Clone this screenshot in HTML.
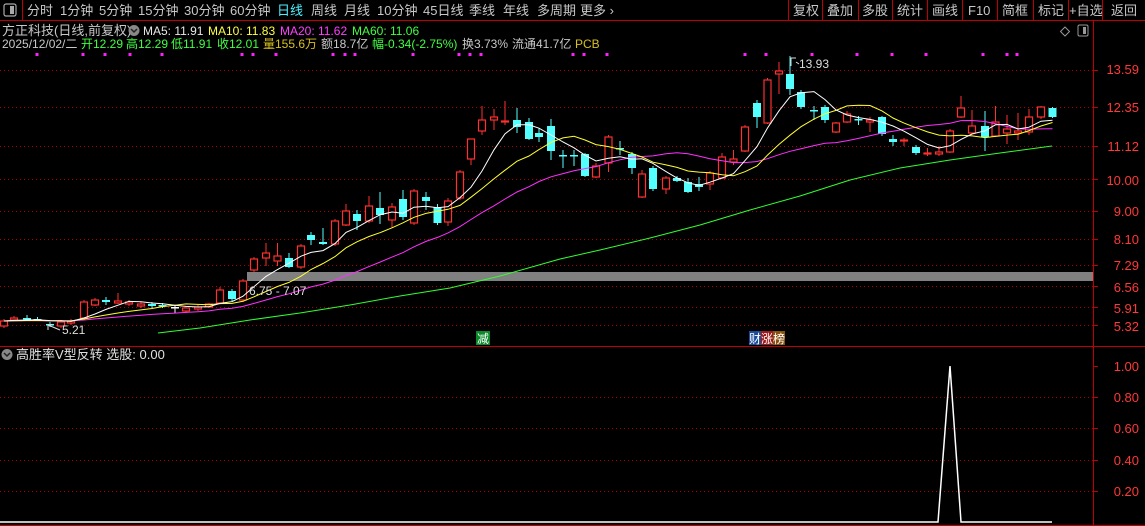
<!DOCTYPE html>
<html><head><meta charset="utf-8">
<style>
html,body{margin:0;padding:0;background:#000;width:1145px;height:526px;overflow:hidden}
svg{display:block}
text{font-family:"Liberation Sans","Noto Sans CJK SC",sans-serif}
</style></head><body>
<svg id="s" width="1145" height="526" viewBox="0 0 1145 526" xmlns="http://www.w3.org/2000/svg">
<rect width="1145" height="526" fill="#000"/>
<!-- toolbar -->
<g font-size="13" fill="#c8c8c8">
<rect x="4" y="4" width="12" height="12" rx="2" fill="none" stroke="#aaa" stroke-width="1.2"/>
<rect x="10" y="6" width="4" height="8" fill="#aaa"/>
<line x1="22.5" y1="0" x2="22.5" y2="20" stroke="#c00000"/>
<text x="27" y="15">分时</text>
<text x="60" y="15">1分钟</text>
<text x="99" y="15">5分钟</text>
<text x="138" y="15">15分钟</text>
<text x="184" y="15">30分钟</text>
<text x="230" y="15">60分钟</text>
<text x="277" y="15" fill="#4ff0ff">日线</text>
<text x="311" y="15">周线</text>
<text x="344" y="15">月线</text>
<text x="377" y="15">10分钟</text>
<text x="423" y="15">45日线</text>
<text x="469" y="15">季线</text>
<text x="503" y="15">年线</text>
<text x="537" y="15">多周期</text>
<text x="580" y="15">更多 ›</text>
<text x="793" y="15">复权</text>
<text x="827" y="15">叠加</text>
<text x="862" y="15">多股</text>
<text x="897" y="15">统计</text>
<text x="932" y="15">画线</text>
<text x="968" y="15">F10</text>
<text x="1002" y="15">简框</text>
<text x="1038" y="15">标记</text>
<text x="1069" y="15">+自选</text>
<text x="1111" y="15">返回</text>
</g>
<g stroke="#c00000">
<line x1="788.5" y1="0" x2="788.5" y2="20"/><line x1="822.5" y1="0" x2="822.5" y2="20"/>
<line x1="858.5" y1="0" x2="858.5" y2="20"/><line x1="892.5" y1="0" x2="892.5" y2="20"/>
<line x1="927.5" y1="0" x2="927.5" y2="20"/><line x1="962.5" y1="0" x2="962.5" y2="20"/>
<line x1="997.5" y1="0" x2="997.5" y2="20"/><line x1="1033.5" y1="0" x2="1033.5" y2="20"/>
<line x1="1068.5" y1="0" x2="1068.5" y2="20"/><line x1="1102.5" y1="0" x2="1102.5" y2="20"/>
<line x1="0" y1="20.5" x2="1145" y2="20.5"/>
<line x1="1093.5" y1="20" x2="1093.5" y2="526"/>
<line x1="0" y1="346.5" x2="1145" y2="346.5"/>
<line x1="0" y1="525.5" x2="1145" y2="525.5"/>
</g>
<!-- header -->
<g font-size="12">
<text x="2" y="35" fill="#c8c8c8" font-size="13">方正科技(日线,前复权)</text>
<circle cx="134" cy="30.5" r="5.5" fill="#888"/><path d="M131 29l3 3 3-3" stroke="#222" fill="none" stroke-width="1.5"/>
<text x="143" y="35" fill="#e8e8e8">MA5: 11.91</text>
<text x="208" y="35" fill="#ffff40">MA10: 11.83</text>
<text x="280" y="35" fill="#ff40ff">MA20: 11.62</text>
<text x="352" y="35" fill="#40ff40">MA60: 11.06</text>
<text x="2" y="48" fill="#c8c8c8">2025/12/02/二</text>
<text x="81" y="48" fill="#40ff40">开12.29</text>
<text x="126" y="48" fill="#40ff40">高12.29</text>
<text x="171" y="48" fill="#40ff40">低11.91</text>
<text x="217" y="48" fill="#40ff40">收12.01</text>
<text x="263" y="48" fill="#d8c020">量155.6万</text>
<text x="321" y="48" fill="#c8c8c8">额18.7亿</text>
<text x="372" y="48" fill="#40ff40">幅-0.34(-2.75%)</text>
<text x="462" y="48" fill="#c8c8c8">换3.73%</text>
<text x="512" y="48" fill="#c8c8c8">流通41.7亿</text>
<text x="575" y="48" fill="#d8c020">PCB</text>
<path d="M1065 27l4.5 4.5-4.5 4.5-4.5-4.5z" fill="none" stroke="#999"/>
<rect x="1078" y="25" width="10" height="11" rx="1.5" fill="none" stroke="#999"/>
<rect x="1083" y="27" width="3" height="7" fill="#999"/>
<circle cx="7" cy="354.5" r="5.5" fill="#888"/><path d="M4 353l3 3 3-3" stroke="#222" fill="none" stroke-width="1.5"/>
<text x="16" y="359" fill="#e0e0e0" font-size="13">高胜率V型反转  选股: 0.00</text>
</g>
<g id="dyn"></g>
<!-- axis labels -->
<g font-size="13" fill="#ff3838" text-anchor="end">
<text x="1139" y="74">13.59</text><text x="1139" y="112">12.35</text><text x="1139" y="151">11.12</text>
<text x="1139" y="185">10.00</text><text x="1139" y="216">9.00</text><text x="1139" y="244">8.10</text>
<text x="1139" y="270">7.29</text><text x="1139" y="292">6.56</text><text x="1139" y="313">5.91</text>
<text x="1139" y="331">5.32</text>
<text x="1139" y="371">1.00</text><text x="1139" y="402">0.80</text><text x="1139" y="433">0.60</text>
<text x="1139" y="465">0.40</text><text x="1139" y="496">0.20</text>
</g>
<!-- labels -->
<rect x="476" y="331" width="14" height="14" fill="#0a8a2a"/>
<text x="477" y="343" font-size="12" fill="#fff">减</text>
<rect x="749" y="331" width="12" height="14" fill="#1a4a9a"/>
<rect x="761" y="331" width="12" height="14" fill="#a01818"/>
<rect x="773" y="331" width="12" height="14" fill="#8a5010"/>
<text x="749" y="343" font-size="12" fill="#fff">财涨榜</text>
<text x="249" y="295" font-size="12" fill="#ddd">6.75 - 7.07</text>
<text x="799" y="68" font-size="12" fill="#ddd">13.93</text>
<path d="M791 66v-8h5M791 58l4 0M796 62l3 2" stroke="#ddd" fill="none"/>
<text x="62" y="334" font-size="12" fill="#ddd">5.21</text>
<path d="M48 325l0 5M48 325l4 0M48 325l12 5" stroke="#ddd" fill="none"/>
<!-- bottom indicator -->
<polyline points="0,522 938,522 950,366 961,522 1052,522" fill="none" stroke="#fff" stroke-width="1.5"/>
</svg>
<script>
var g=document.getElementById('dyn'),h='';
function L(x1,y1,x2,y2,c,w,d){h+='<line x1="'+x1+'" y1="'+y1+'" x2="'+x2+'" y2="'+y2+'" stroke="'+c+'" stroke-width="'+(w||1)+'"'+(d?' stroke-dasharray="'+d+'"':'')+'/>';}
[70,107,146,179,211,239,265,286,307,325,397,428,460,491].forEach(function(y){L(0,y+.5,1093,y+.5,'#b00000',1,'1 3');});
[70,107,146,179,211,239,265,286,307,325,366,397,428,460,491].forEach(function(y){L(1093,y+.5,1098,y+.5,'#c00000');});
h+='<rect x="247" y="272" width="846" height="9" fill="#808080"/>';
[37,83,105,130,162,242,253,276,333,345,355,413,459,470,481,573,584,607,745,766,812,857,892,926,983,1007,1017].forEach(function(x){h+='<rect x="'+(x-1.5)+'" y="53" width="3" height="3" fill="#ff20ff"/>';});
// [x,top,bot,type,hi,lo]
var C=[[4,321,326,'r'],[14,318,320,'r',316,321],[27,318,319,'c',315,321],[37.5,319,320,'c',317,321],[50,324,325,'c',322,327],[61,322,326,'r'],[71,321,323,'r'],[84,302,318,'r'],[95,300,305,'r',298,306],[106,300,302,'c',297,305],[118,301,303,'r',293,304],[129,302,304,'r',300,306],[141,304,306,'r'],[152,304,306,'c',302,308],[162.5,305,306,'c'],[175,307,308,'w',305,313],[186,308,311,'r'],[198,307,309,'r'],[209,304,307,'r',303,308],[220,290,303,'r',287,304],[232,291,299,'c'],[243,281,300,'r'],[254,259,270,'r'],[266,253,258,'r',243,266],[277.5,256,261,'r',243,266],[289,258,267,'c',253,268],[301,246,267,'r'],[311,235,240,'c',232,245],[323,242,244,'c',228,245],[335,221,244,'r'],[346,211,225,'r',204,226],[357,214,221,'c',210,230],[369,206,221,'r',196,223],[380,208,215,'c',192,224],[392,207,220,'r',203,228],[403,199,217,'c',190,220],[414,191,223,'r'],[426,197,201,'c',192,210],[437.5,207,223,'c',204,225],[448,201,222,'r',198,226],[460,172,198,'r'],[471,139,159,'r',139,165],[482,120,131,'r',106,135],[494,117,120,'r',109,130],[505,121,122,'r',101,125],[517,120,127,'c',108,133],[529,122,139,'c',118,140],[539,133,137,'c',128,142],[551,126,151,'c',119,160],
[563,155,156,'c',150,168],[574,155,156,'c',150,166],[585,154,176,'c',153,177],[596,166,177,'r',163,178],[608.5,137,163,'r',135,172],[620,148,149,'c',141,155],[632,154,168,'c',152,174],[642,174,197,'r',170,198],[653,168,189,'c',166,191],[666,178,189,'r',176,194],[677,178,181,'c',176,182],[688,182,192,'c',178,193],[699,184,187,'c',177,191],[710,173,184,'r',171,190],[722,157,178,'r',153,179],[733.5,159,162,'r',150,165],[745,127,151,'r',125,152],[757,103,117,'c',100,128],[767.5,80,123,'r',78,124],[779,71,74,'r',62,94],[790,74,89,'c',56,95],[801,92,107,'c',90,109],[814,110,111,'c',106,120],[825,107,120,'c',105,123],[836,123,132,'r',122,133],[847,114,122,'r',111,123],[858.5,119,120,'c',116,125],[870,120,122,'r',117,132],[882,117,134,'c',116,136],[893,139,142,'c',135,146],[904,140,141,'r',138,146],[916,147,153,'c'],[927.5,153,154,'r',148,156],[939,152,154,'r',146,156],[950,131,152,'r',129,153],[961,108,117,'r',96,118],[972,126,133,'r',110,134],[985,126,137,'c',111,151],[995.5,122,136,'r',106,137],[1007,129,133,'r',115,144],[1018,131,133,'r',113,140],[1029,117,132,'r',109,135],[1041,107,117,'r',106,119],[1052.5,108,117,'c',107,118]];
var cl=[];
C.forEach(function(c){var x=c[0],t=c[1],b=c[2],k=c[3],hi=c[4]||t-2,lo=c[5]||b+2;
var col=k=='r'?'#ff3030':(k=='w'?'#ffffff':'#54ffff');
L(x,hi,x,lo,col);
if(k=='r'){h+='<rect x="'+(x-3.5)+'" y="'+t+'" width="7" height="'+Math.max(b-t,1)+'" fill="#000" stroke="'+col+'" stroke-width="1.2"/>';cl.push(t);}
else{h+='<rect x="'+(x-4)+'" y="'+t+'" width="8" height="'+Math.max(b-t,1.5)+'" fill="'+col+'"/>';cl.push(b);}
});
function ma(n,col){var p=[];for(var i=0;i<cl.length;i++){var s=0;for(var j=i-n+1;j<=i;j++)s+=cl[Math.max(j,0)];p.push(C[i][0]+','+(s/n).toFixed(1));}
h+='<polyline points="'+p.join(' ')+'" fill="none" stroke="'+col+'" stroke-width="1"/>';}
ma(20,'#ff30ff');ma(10,'#ffff30');ma(5,'#ffffff');
h+='<polyline points="158,333 200,328 250,320 300,313 350,305 400,296 450,288 500,276 560,259 600,250 650,238 700,225 750,210 800,196 850,180 900,168 950,160 1000,153 1052,146" fill="none" stroke="#30ff30" stroke-width="1"/>';
g.innerHTML=h;
</script>
</body></html>
